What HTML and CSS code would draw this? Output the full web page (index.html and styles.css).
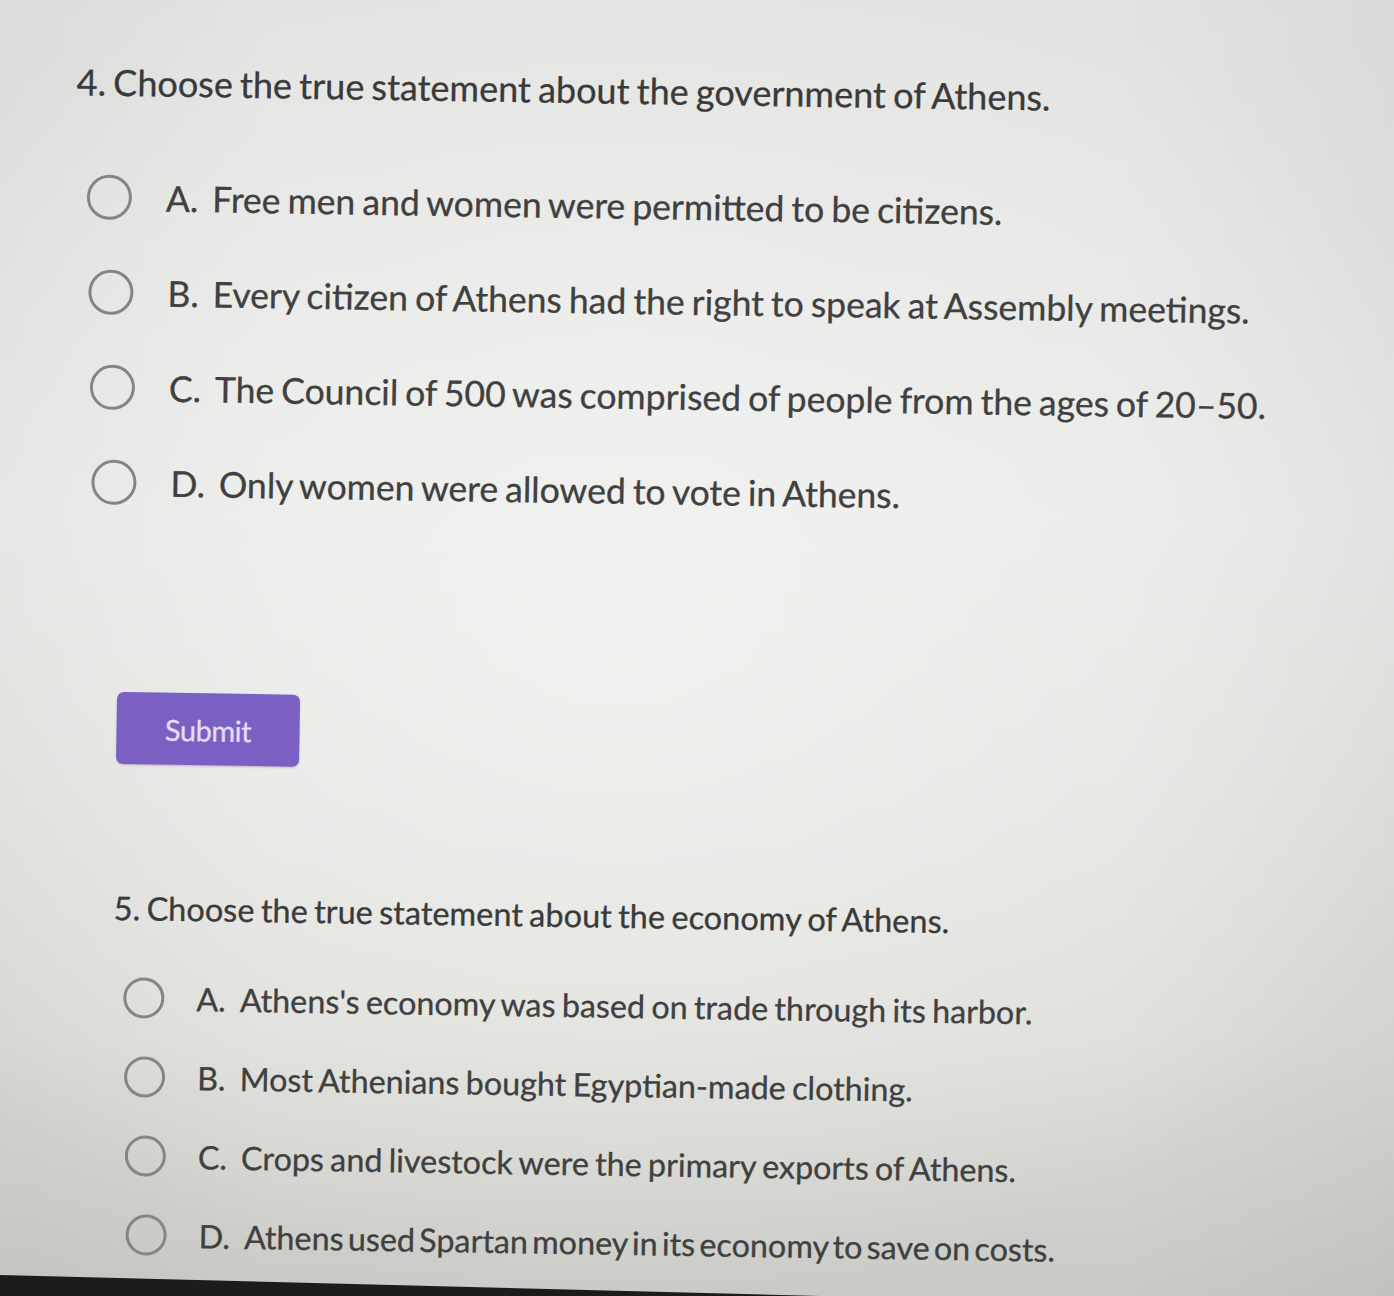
FILE: index.html
```html
<!DOCTYPE html>
<html lang="en">
<head>
<meta charset="utf-8">
<title>Athens Quiz</title>
<link rel="stylesheet" href="styles.css">
</head>
<body>
<div class="screen">
  <main class="page">
    <section class="question q4">
      <h2 class="q-title">4. Choose the true statement about the government of Athens.</h2>
      <ul class="options">
        <li class="option o1"><span class="radio"></span><span class="label"><span class="letter">A.</span>Free men and women were permitted to be citizens.</span></li>
        <li class="option o2"><span class="radio"></span><span class="label"><span class="letter">B.</span>Every citizen of Athens had the right to speak at Assembly meetings.</span></li>
        <li class="option o3"><span class="radio"></span><span class="label"><span class="letter">C.</span>The Council of 500 was comprised of people from the ages of 20–50.</span></li>
        <li class="option o4"><span class="radio"></span><span class="label"><span class="letter">D.</span>Only women were allowed to vote in Athens.</span></li>
      </ul>
      <button class="submit" type="button">Submit</button>
    </section>
    <section class="question q5">
      <h2 class="q-title">5. Choose the true statement about the economy of Athens.</h2>
      <ul class="options">
        <li class="option o1"><span class="radio"></span><span class="label"><span class="letter">A.</span>Athens's economy was based on trade through its harbor.</span></li>
        <li class="option o2"><span class="radio"></span><span class="label"><span class="letter">B.</span>Most Athenians bought Egyptian-made clothing.</span></li>
        <li class="option o3"><span class="radio"></span><span class="label"><span class="letter">C.</span>Crops and livestock were the primary exports of Athens.</span></li>
        <li class="option o4"><span class="radio"></span><span class="label"><span class="letter">D.</span>Athens used Spartan money in its economy to save on costs.</span></li>
      </ul>
    </section>
  </main>
  <div class="bezel"></div>
</div>
</body>
</html>
```

FILE: styles.css
```css
html, body {
  margin: 0;
  padding: 0;
}
body {
  width: 1394px;
  height: 1296px;
  overflow: hidden;
  font-family: Lato, "Open Sans", sans-serif;
  color: #474747;
  background:
    radial-gradient(ellipse 900px 700px at 620px 600px, #f1f1ef 0%, rgba(241,241,239,0) 100%),
    linear-gradient(90deg, rgba(0,0,0,0.03) 0%, rgba(0,0,0,0) 20%, rgba(0,0,0,0) 80%, rgba(0,0,0,0.04) 100%),
    linear-gradient(180deg, #e2e2e0 0%, #e9e9e7 40%, #dcdcd8 80%, #c9c9c5 100%);
}
.screen {
  position: relative;
  width: 1394px;
  height: 1296px;
}
.page {
  padding: 58px 0 0 78px;
  transform: rotate(0.9deg);
  transform-origin: 0 0;
}
.q-title {
  margin: 0;
  font-weight: 400;
  font-size: 36px;
  letter-spacing: 0;
  word-spacing: -2px;
  color: #3a3a3a;
  line-height: 44px;
  -webkit-text-stroke: 0.3px #3a3a3a;
}
.options {
  list-style: none;
  margin: 0;
  padding: 0;
}
.option {
  display: flex;
  align-items: center;
}
.radio {
  flex: none;
  box-sizing: border-box;
  border-radius: 50%;
  border: 3.5px solid #858585;
}
.label {
  letter-spacing: 0;
  word-spacing: -2px;
  color: #404040;
  -webkit-text-stroke: 0.3px #404040;
}
.letter {
  margin-right: 14px;
}
.q4 .options {
  margin-top: 71px;
  padding-left: 12px;
  display: flex;
  flex-direction: column;
  gap: 50px;
}
.q4 .radio {
  width: 45px;
  height: 45px;
  margin-right: 34px;
}
.q4 .label {
  font-size: 35.5px;
}
.q4 .o2 { padding-left: 3px; }
.q4 .o3 { padding-left: 6px; }
.q4 .o4 { padding-left: 9px; }
.submit {
  display: block;
  margin: 187px 0 0 50px;
  width: 183px;
  height: 72px;
  border: none;
  border-radius: 7px;
  background: #7b60c4;
  color: #e6ddf4;
  font-family: Lato, sans-serif;
  font-size: 29px;
  letter-spacing: -0.5px;
  -webkit-text-stroke: 0.3px #e6ddf4;
  box-shadow: 0 1px 2px rgba(60, 40, 120, 0.25);
}
.q5 {
  margin: 124px 0 0 50px;
}
.q5 .q-title {
  font-size: 32.5px;
  line-height: 40px;
}
.q5 .options {
  margin-top: 49px;
  padding-left: 11px;
  display: flex;
  flex-direction: column;
  gap: 38px;
}
.q5 .radio {
  width: 41px;
  height: 41px;
  margin-right: 32px;
}
.q5 .label {
  font-size: 32.3px;
}
.q5 .o2 { padding-left: 2px; }
.q5 .o3 { padding-left: 4px; }
.q5 .o4 { padding-left: 6px; }
.q5 .o4 .label { word-spacing: -4px; }
.bezel {
  position: absolute;
  left: 0;
  bottom: 0;
  width: 820px;
  height: 21px;
  background: #1c1c1c;
  clip-path: polygon(0 0, 820px 21px, 0 21px);
}
```
